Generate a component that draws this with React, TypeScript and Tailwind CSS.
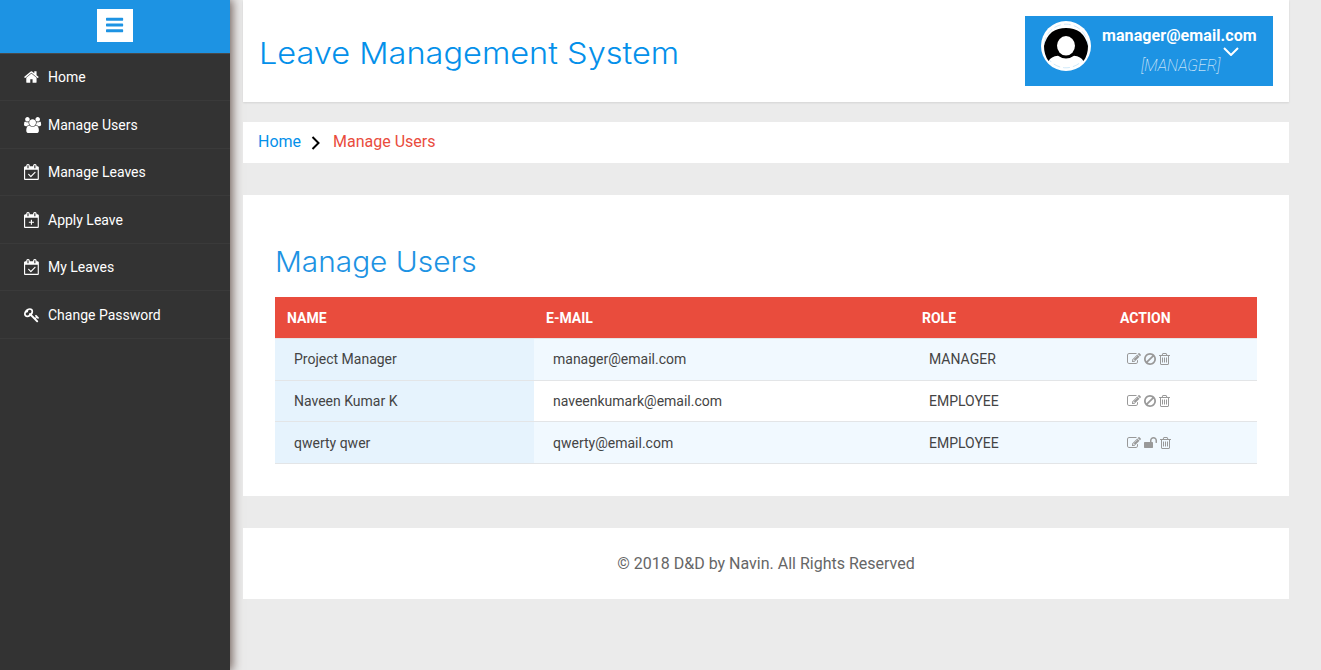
import React from "react";

type Glyph = { x: number; w: number; d: string };

const G: Record<string, Glyph> = {
  home: {
    x: 64,
    w: 1664,
    d: "M1472 992v480q0 26-19 45t-45 19h-384v-384h-256v384h-384q-26 0-45-19t-19-45v-480q0-1 .5-3t.5-3l575-474 575 474q1 2 1 6zm223-69l-62 74q-8 9-21 11h-3q-13 0-21-7l-692-577-692 577q-12 8-24 7-13-2-21-11l-62-74q-8-10-7-23.5t11-21.5l719-599q32-26 76-26t76 26l244 204v-195q0-14 9-23t23-9h192q14 0 23 9t9 23v408l219 182q10 8 11 21.5t-7 23.5z",
  },
  users: {
    x: -64,
    w: 1920,
    d: "M529 896q-162 5-265 128h-134q-82 0-138-40.5t-56-118.5q0-353 124-353 6 0 43.5 21t97.5 42.5 119 21.5q67 0 133-23-5 37-5 66 0 139 81 256zm1071 637q0 120-73 189.5t-194 69.5h-874q-121 0-194-69.5t-73-189.5q0-53 3.5-103.5t14-109 26.5-108.5 43-97.5 62-81 85.5-53.5 111.5-20q10 0 43 21.5t73 48 107 48 135 21.5 135-21.5 107-48 73-48 43-21.5q61 0 111.5 20t85.5 53.5 62 81 43 97.5 26.5 108.5 14 109 3.5 103.5zm-1024-1277q0 106-75 181t-181 75-181-75-75-181 75-181 181-75 181 75 75 181zm704 384q0 159-112.5 271.5t-271.5 112.5-271.5-112.5-112.5-271.5 112.5-271.5 271.5-112.5 271.5 112.5 112.5 271.5zm576 225q0 78-56 118.5t-138 40.5h-134q-103-123-265-128 81-117 81-256 0-29-5-66 66 23 133 23 59 0 119-21.5t97.5-42.5 43.5-21q124 0 124 353zm-128-609q0 106-75 181t-181 75-181-75-75-181 75-181 181-75 181 75 75 181z",
  },
  calCheck: {
    x: 0,
    w: 1664,
    d: "M1303 964l-512 512q-10 9-23 9t-23-9l-288-288q-9-10-9-23t9-22l46-46q9-9 22-9t23 9l220 220 444-444q10-9 23-9t22 9l46 46q9 9 9 22t-9 23zm-1175 700h1408v-1024h-1408v1024zm384-1216v-288q0-14-9-23t-23-9h-64q-14 0-23 9t-9 23v288q0 14 9 23t23 9h64q14 0 23-9t9-23zm768 0v-288q0-14-9-23t-23-9h-64q-14 0-23 9t-9 23v288q0 14 9 23t23 9h64q14 0 23-9t9-23zm384-64v1280q0 52-38 90t-90 38h-1408q-52 0-90-38t-38-90v-1280q0-52 38-90t90-38h128v-96q0-66 47-113t113-47h64q66 0 113 47t47 113v96h384v-96q0-66 47-113t113-47h64q66 0 113 47t47 113v96h128q52 0 90 38t38 90z",
  },
  calPlus: {
    x: 0,
    w: 1664,
    d: "M768 864h128v224h224v128h-224v224h-128v-224h-224v-128h224zM128 1664h1408v-1024h-1408v1024zm384-1216v-288q0-14-9-23t-23-9h-64q-14 0-23 9t-9 23v288q0 14 9 23t23 9h64q14 0 23-9t9-23zm768 0v-288q0-14-9-23t-23-9h-64q-14 0-23 9t-9 23v288q0 14 9 23t23 9h64q14 0 23-9t9-23zm384-64v1280q0 52-38 90t-90 38h-1408q-52 0-90-38t-38-90v-1280q0-52 38-90t90-38h128v-96q0-66 47-113t113-47h64q66 0 113 47t47 113v96h384v-96q0-66 47-113t113-47h64q66 0 113 47t47 113v96h128q52 0 90 38t38 90z",
  },
  key: {
    x: 0,
    w: 1792,
    d: "M832 512q0-80-56-136t-136-56-136 56-56 136q0 42 19 83-41-19-83-19-80 0-136 56t-56 136 56 136 136 56 136-56 56-136q0-42-19-83 41 19 83 19 80 0 136-56t56-136zm851 704q0 17-49 66t-66 49q-9 0-28.5-16t-36.5-33-38.5-40-24.5-26l-96 96 220 220q28 28 28 68 0 42-39 81t-81 39q-40 0-68-28l-671-671q-176 131-365 131-163 0-265.5-102.5t-102.5-265.5q0-160 95-313t248-248 313-95q163 0 265.5 102.5t102.5 265.5q0 189-131 365l355 355 96-96q-3-3-26-24.5t-40-38.5-33-36.5-16-28.5q0-17 49-66t66-49q13 0 23 10 6 6 46 44.5t82 79.5 86.5 86 73 78 28.5 41z",
  },
  edit: {
    x: 0,
    w: 1792,
    d: "M888 1184l116-116-152-152-116 116v56h96v96h56zm440-720q-16-16-33 1l-350 350q-17 17-1 33t33-1l350-350q17-17 1-33zm80 594v190q0 119-84.5 203.5t-203.5 84.5h-832q-119 0-203.5-84.5t-84.5-203.5v-832q0-119 84.5-203.5t203.5-84.5h832q63 0 117 25 15 7 18 23 3 17-9 29l-49 49q-14 14-32 8-23-6-45-6h-832q-66 0-113 47t-47 113v832q0 66 47 113t113 47h832q66 0 113-47t47-113v-126q0-13 9-22l64-64q15-15 35-7t20 29zm-96-738l288 288-672 672h-288v-288zm444 132l-92 92-288-288 92-92q28-28 68-28t68 28l152 152q28 28 28 68t-28 68z",
  },
  ban: {
    x: 128,
    w: 1536,
    d: "M1440 893q0-161-87-295l-754 753q137 89 297 89 111 0 211.5-43.5t173.5-116.5 116-174.5 43-212.5zm-999 299l755-754q-135-91-300-91-148 0-273 73t-198 199-73 274q0 162 89 299zm1223-299q0 157-61 300t-163.5 246-245 164-298.5 61-298.5-61-245-164-163.5-246-61-300 61-299.5 163.5-245.5 245-164 298.5-61 298.5 61 245 164 163.5 245.5 61 299.5z",
  },
  unlock: {
    x: 64,
    w: 1664,
    d: "M1728 576v256q0 26-19 45t-45 19h-64q-26 0-45-19t-19-45v-256q0-106-75-181t-181-75-181 75-75 181v192h96q40 0 68 28t28 68v576q0 40-28 68t-68 28h-960q-40 0-68-28t-28-68v-576q0-40 28-68t68-28h672v-192q0-185 131.5-316.5t316.5-131.5 316.5 131.5 131.5 316.5z",
  },
  trash: {
    x: 192,
    w: 1408,
    d: "M704 736v576q0 14-9 23t-23 9h-64q-14 0-23-9t-9-23v-576q0-14 9-23t23-9h64q14 0 23 9t9 23zm256 0v576q0 14-9 23t-23 9h-64q-14 0-23-9t-9-23v-576q0-14 9-23t23-9h64q14 0 23 9t9 23zm256 0v576q0 14-9 23t-23 9h-64q-14 0-23-9t-9-23v-576q0-14 9-23t23-9h64q14 0 23 9t9 23zm128 724v-948h-896v948q0 22 7 40.5t14.5 27 10.5 8.5h832q3 0 10.5-8.5t14.5-27 7-40.5zm-672-1076h448l-48-117q-7-9-17-11h-317q-10 2-17 11zm928 32v64q0 14-9 23t-23 9h-96v948q0 83-47 143.5t-113 60.5h-832q-66 0-113-58.5t-47-141.5v-952h-96q-14 0-23-9t-9-23v-64q0-14 9-23t23-9h309l70-167q15-37 54-63t79-26h320q40 0 79 26t54 63l70 167h309q14 0 23 9t9 23z",
  },
  bars: {
    x: 0,
    w: 1536,
    d: "M1536 1344v128q0 26-19 45t-45 19h-1408q-26 0-45-19t-19-45v-128q0-26 19-45t45-19h1408q26 0 45 19t19 45zm0-512v128q0 26-19 45t-45 19h-1408q-26 0-45-19t-19-45v-128q0-26 19-45t45-19h1408q26 0 45 19t19 45zm0-512v128q0 26-19 45t-45 19h-1408q-26 0-45-19t-19-45v-128q0-26 19-45t45-19h1408q26 0 45 19t19 45z",
  },
};

function Icon({ name, size }: { name: string; size: number }) {
  const g = G[name];
  return (
    <svg
      className="block shrink-0 overflow-visible"
      width={(g.w / 1792) * size}
      height={size}
      viewBox={`${g.x} 0 ${g.w} 1792`}
      fill="currentColor"
      aria-hidden="true"
    >
      <path d={g.d} />
    </svg>
  );
}

const NAV = [
  ["home", "Home"],
  ["users", "Manage Users"],
  ["calCheck", "Manage Leaves"],
  ["calPlus", "Apply Leave"],
  ["calCheck", "My Leaves"],
  ["key", "Change Password"],
];

const USERS = [
  ["Project Manager", "manager@email.com", "MANAGER", "ban"],
  ["Naveen Kumar K", "naveenkumark@email.com", "EMPLOYEE", "ban"],
  ["qwerty qwer", "qwerty@email.com", "EMPLOYEE", "unlock"],
];

function Sidebar() {
  return (
    <aside className="relative z-10 flex w-[230px] shrink-0 flex-col bg-[#333] text-white shadow-[1px_0_10px_1px_#6b5953]">
      <div className="flex h-[52.9px] justify-center bg-[#1d93e3] pt-[9px]">
        <button className="flex h-[33px] w-9 items-center justify-center bg-white pb-px text-[#1d93e3]">
          <Icon name="bars" size={20} />
        </button>
      </div>
      <ul className="border-t border-[#4a4a4a]">
        {NAV.map(([icon, label]) => (
          <li key={label} className="flex h-[47.5px] items-center border-b border-[#3a3a3a] pl-6 text-sm">
            <span className="w-6">
              <Icon name={icon} size={16} />
            </span>
            {label}
          </li>
        ))}
      </ul>
    </aside>
  );
}

function Header() {
  return (
    <header className="flex h-[102px] justify-between bg-white pt-4 pr-4 pl-[16px] shadow-[0_1px_2px_rgba(0,0,0,0.1)]">
      <h1 className="origin-left scale-x-[1.084] pt-[17px] font-[Inter] text-[30px] leading-[40px] font-light whitespace-nowrap text-[#0490ea]">
        Leave Management System
      </h1>
      <div className="flex h-[70px] w-[248px] bg-[#1d93e3] pt-[5px] pl-4 text-white">
        <svg className="size-[50px] shrink-0" viewBox="0 0 50 50" aria-hidden="true">
          <circle cx="25" cy="25" r="25" fill="#fff" />
          <circle cx="25" cy="25" r="21.800" fill="none" stroke="#c4e3f8" strokeWidth=".8" strokeDasharray="7 3" />
          <path
            d="M3 25Q5 16 11 11Q17 7 25 7Q33 7 39 11Q45 16 47 25Q47 34 42.500 40Q40 35.500 33 34.800Q29.500 37.500 25 37.500Q20.500 37.500 17 34.800Q10 35.500 7.500 40Q3 34 3 25z"
            fill="#000"
          />
          <ellipse cx="25" cy="24.800" rx="9" ry="9.700" fill="#fff" />
        </svg>
        <div className="flex flex-col pl-[11px]">
          <span className="pt-[5px] text-base leading-[20px] font-bold tracking-[0.08px]">manager@email.com</span>
          <div className="flex">
            <span className="pt-[10px] pl-[39px] leading-[20px] font-thin italic">[MANAGER]</span>
            <svg className="mt-px ml-[3px] h-[9px] w-4" viewBox="0 0 16 9" fill="none" stroke="#fff" strokeWidth="2">
              <path d="M1 1l7 7 7-7" />
            </svg>
          </div>
        </div>
      </div>
    </header>
  );
}

function UserTable() {
  return (
    <table className="w-full table-fixed border-collapse text-left text-sm">
      <colgroup>
        <col className="w-[259px]" />
        <col className="w-[376px]" />
        <col className="w-[198px]" />
        <col />
      </colgroup>
      <thead>
        <tr className="h-[41px] bg-[#e94c3d] text-white">
          {["NAME", "E-MAIL", "ROLE", "ACTION"].map((h) => (
            <th key={h} className="px-3 pt-[2px] pb-0 font-bold">
              {h}
            </th>
          ))}
        </tr>
      </thead>
      <tbody className="text-[#444]">
        {USERS.map(([name, mail, role, toggle]) => (
          <tr
            key={name}
            className="h-[42px] border-y border-[#e3e5e7] odd:bg-[#f1f9ff] even:h-[41px] last:*:pt-[2px]"
          >
            <td className="bg-[#e6f3fd] pb-0 pl-[19px]">{name}</td>
            <td className="pb-0 pl-[19px]">{mail}</td>
            <td className="pb-0 pl-[19px]">{role}</td>
            <td className="pb-0 pl-[19px]">
              <div className="flex gap-[2.800px] text-[#999]">
                <Icon name="edit" size={14} />
                <Icon name={toggle} size={14} />
                <Icon name="trash" size={14} />
              </div>
            </td>
          </tr>
        ))}
      </tbody>
    </table>
  );
}

export default function App() {
  return (
    <div className="flex h-[670px] w-[1321px] overflow-hidden bg-[#ebebeb] font-[Roboto,sans-serif]">
      <Sidebar />
      <main className="relative z-20 ml-[13px] w-[1046px]">
        <Header />
        <nav className="mt-5 flex h-[41px] items-center bg-white pb-[2px] pl-[15px] text-base text-[#0490ea]">
          Home
          <svg className="mt-[3px] ml-[10px] h-[14px] w-[10px]" viewBox="0 0 10 14" fill="none" stroke="#000" strokeWidth="2">
            <path d="M1.500 1l6 6-6 6" />
          </svg>
          <span className="ml-[12px] text-[#e94c3d]">Manage Users</span>
        </nav>
        <section className="mt-8 h-[301px] bg-white px-8 pt-[47px]">
          <h2 className="mb-[15px] w-fit origin-left scale-x-[1.065] font-[Inter] text-[28px] leading-[40px] font-light whitespace-nowrap text-[#1d93e3]">
            Manage Users
          </h2>
          <UserTable />
        </section>
        <footer className="mt-8 flex h-[71px] items-center justify-center bg-white text-base text-[#666]">
          © 2018 D&amp;D by Navin. All Rights Reserved
        </footer>
      </main>
    </div>
  );
}
